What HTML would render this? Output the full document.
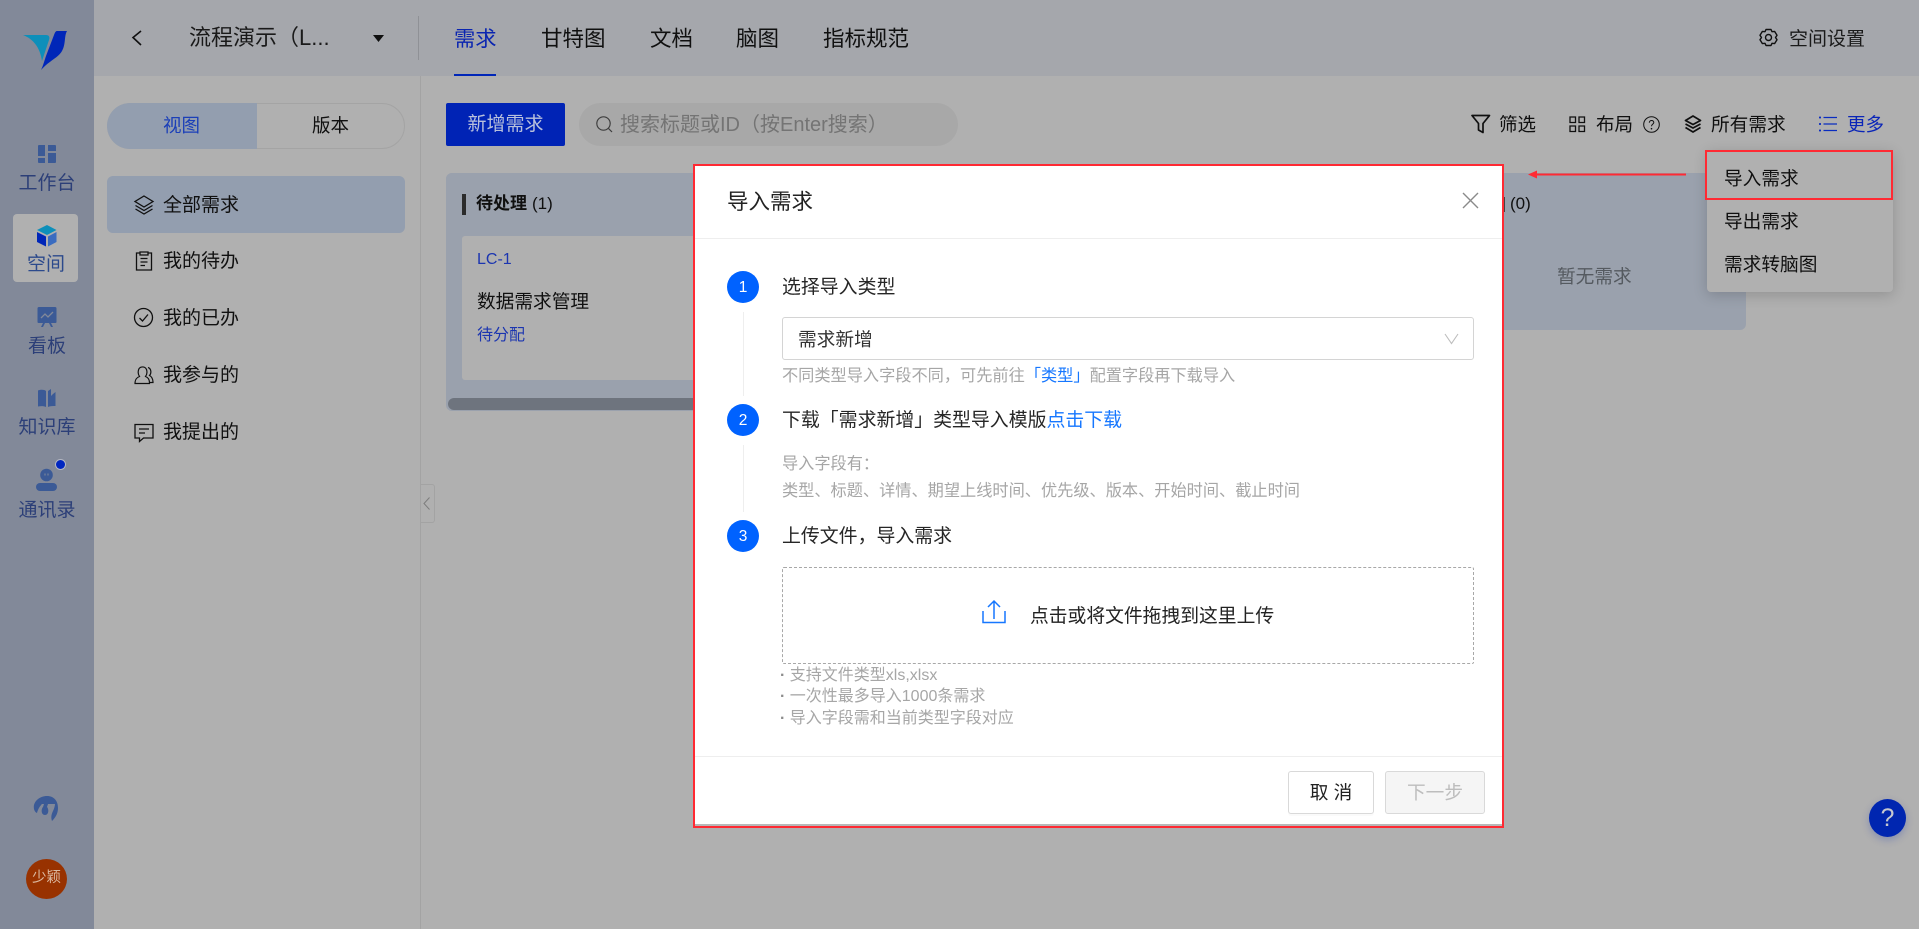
<!DOCTYPE html>
<html lang="zh-CN"><head><meta charset="utf-8"><title>导入需求</title>
<style>
*{box-sizing:border-box}
html,body{margin:0;padding:0;width:1919px;height:929px;overflow:hidden;background:#b0b0b0}
body{position:relative;font-family:"Liberation Sans","Noto Sans CJK SC",sans-serif;color:#101010}
.a{position:absolute}
.t{position:absolute;white-space:nowrap;line-height:30px;height:30px;font-size:19px;margin-top:2px}
svg{position:absolute;overflow:visible;fill:none}
.nav{color:#2c3f78;width:94px;left:0;text-align:center;font-size:19px}
.hint{color:#a6a6a6;font-size:16.2px}
.step{font-size:18.9px;color:#262626}
.c{position:absolute;left:727px;width:32px;height:32px;border-radius:50%;background:#0062ff;color:#fff;text-align:center;line-height:33px;font-size:15.5px}
.ln{position:absolute;left:743px;width:1px;background:#eeeeee}
b.d{font-weight:700;color:#8c8c8c}
</style></head><body>

<!-- sidebar -->
<div class="a" style="left:0;top:0;width:94px;height:929px;background:#828999"></div>
<svg style="left:0;top:0" width="94" height="80">
<path d="M23 35H46C49 35 50 37 49 40L42 61C40 47 33 39 23 35Z" fill="#0d8fba"/>
<path d="M57 31H67C64 36 66 44 62 51C58 58 50 60 41 70C43 66 44 62 46 56L54 35C55 32 56 31 57 31Z" fill="#0026b8"/>
</svg>
<svg style="left:38px;top:145px" width="18" height="18"><path d="M0 1a1 1 0 0 1 1-1h6v11H0zM10 0h7a1 1 0 0 1 1 1v5h-8zM10 8h8v9a1 1 0 0 1-1 1h-7zM0 13h7v5H1a1 1 0 0 1-1-1z" fill="#3b5a96"/></svg>
<div class="t nav" style="top:167px">工作台</div>
<div class="a" style="left:13px;top:214px;width:65px;height:68px;background:#b0b0b0;border-radius:4px"></div>
<svg style="left:36px;top:225px" width="22" height="22"><path d="M11 0L20.500 5 11 10 1 5Z" fill="#0d8fba"/><path d="M1 7L10 11.500V21.500L1 17Z" fill="#0026b8"/><path d="M20.500 7V17L12 21.500V11.500Z" fill="#3a6cc0"/></svg>
<div class="t nav" style="top:248px;color:#2c4a8c;width:92px">空间</div>
<svg style="left:37px;top:307px" width="20" height="20"><path d="M2 0H18a1.500 1.500 0 0 1 1.500 1.500V15a1 1 0 0 1-1 1H14l2 4h-2l-2-4H8L6 20H4l2-4H1.500a1 1 0 0 1-1-1V1.500A1.500 1.500 0 0 1 2 0Z" fill="#3b5a96"/><path d="M4 11L8 7 11 10 16 5" stroke="#828999" stroke-width="1.300"/></svg>
<div class="t nav" style="top:330px">看板</div>
<svg style="left:38px;top:389px" width="18" height="18"><path d="M0 1.500C3 .5 6 .5 8 2V18C6 17 3 17 0 17.500ZM10 2L13 0V7L15 5 17.500 3V17C15 17 12 17 10 18Z" fill="#3b5a96"/></svg>
<div class="t nav" style="top:411px">知识库</div>
<svg style="left:36px;top:460px" width="22" height="32"><circle cx="10.500" cy="15" r="6.300" fill="#3b5a96"/><rect x="0" y="23" width="21" height="8" rx="4" fill="#3b5a96"/><path d="M9 13.500v2M12 13.500v2" stroke="#828999"/></svg>
<div class="a" style="left:55.500px;top:459.500px;width:9px;height:9px;border-radius:50%;background:#0026c0;box-shadow:0 0 0 1px #b4b8c4"></div>
<div class="t nav" style="top:494px">通讯录</div>
<svg style="left:33px;top:796px" width="28" height="26"><path d="M14 0C21 0 25 5 25 12C25 18 22 22 19 25C18 22 18 19 20 15C21 13 22 10 22 8H15L14 11C16 13 16 19 12 19C8 19 8 13 10 11L11 8H9C7 10 5 13 4 17C2 16 0.800 14 0.800 11C0.800 5 7 0 14 0Z" fill="#3b5a96"/></svg>
<div class="a" style="left:26px;top:859px;width:41px;height:40px;border-radius:50%;background:#983200;color:#dbb9a0;font-size:14.500px;line-height:38px;text-align:center;white-space:nowrap">少颖</div>

<!-- header -->
<div class="a" style="left:94px;top:0;width:1825px;height:76px;background:#a5a7ac"></div>
<svg style="left:131px;top:30px" width="12" height="16"><path d="M10 1L2 7.500 10 15" stroke="#101010" stroke-width="1.600"/></svg>
<div class="t" style="left:189px;top:21px;font-size:22px;color:#1a1a1a">流程演示（L...</div>
<svg style="left:373px;top:35px" width="11" height="8"><path d="M0 0H11L5.500 7Z" fill="#101010"/></svg>
<div class="a" style="left:418px;top:16px;width:1px;height:44px;background:#8f9196"></div>
<div class="t" style="left:454px;top:22px;font-size:21.300px;color:#0a25b0">需求</div>
<div class="a" style="left:454px;top:74px;width:42px;height:2px;background:#0026b8"></div>
<div class="t" style="left:541px;top:22px;font-size:21.500px">甘特图</div>
<div class="t" style="left:650px;top:22px;font-size:21.500px">文档</div>
<div class="t" style="left:736px;top:22px;font-size:21.500px">脑图</div>
<div class="t" style="left:823px;top:22px;font-size:21.500px">指标规范</div>
<svg style="left:1759px;top:28px" width="19" height="19" viewBox="0 0 19 19"><path d="M7 1.500H12L13 3.700L15.600 3.400L18 7.300L16.500 9.500L18 11.700L15.600 15.600L13 15.300L12 17.500H7L6 15.300L3.400 15.600L1 11.700L2.500 9.500L1 7.300L3.400 3.400L6 3.700Z" stroke="#101010" stroke-width="1.400" stroke-linejoin="round"/><circle cx="9.500" cy="9.500" r="3" stroke="#101010" stroke-width="1.400"/></svg>
<div class="t" style="left:1789px;top:23px;color:#1a1a1a">空间设置</div>

<!-- left panel -->
<div class="a" style="left:420px;top:76px;width:1px;height:853px;background:#a3a3a3"></div>
<div class="a" style="left:107px;top:103px;width:298px;height:46px;border-radius:23px;border:1px solid #a4a4a4"></div>
<div class="a" style="left:107px;top:103px;width:150px;height:46px;border-radius:23px 0 0 23px;background:#939eaf"></div>
<div class="t" style="left:163px;top:109px;font-size:18.500px;color:#1b3fb8">视图</div>
<div class="t" style="left:312px;top:109px;font-size:18.500px">版本</div>
<div class="a" style="left:107px;top:176px;width:298px;height:57px;border-radius:6px;background:#939eaf"></div>
<svg style="left:134px;top:195px" width="20" height="20"><path d="M10 1L19 6.500 10 12 1 6.500Z M1.500 10.500L10 15.500 18.500 10.500 M1.500 14L10 19 18.500 14" stroke="#101010" stroke-width="1.300"/></svg>
<div class="t" style="left:163px;top:189px">全部需求</div>
<svg style="left:135px;top:251px" width="18" height="20"><path d="M5 2H1.500V19H16.500V2H13M5 1H13V4H5Z M5.500 7.500H12.500M5.500 11H12.500M5.500 14.500H10" stroke="#101010" stroke-width="1.300"/></svg>
<div class="t" style="left:163px;top:245px">我的待办</div>
<svg style="left:134px;top:308px" width="20" height="20"><circle cx="9.500" cy="9.500" r="9" stroke="#101010" stroke-width="1.300"/><path d="M5.500 10L8.500 13 14 6.500" stroke="#101010" stroke-width="1.300"/></svg>
<div class="t" style="left:163px;top:302px">我的已办</div>
<svg style="left:134px;top:365px" width="20" height="20"><path d="M1 18.500C1 14 3 12.500 5.500 11.500 4 9.500 4 7 4.500 5 5.500 1 11 1 12.500 4.500 13.500 7.500 13 9.500 11.500 11.500 14 12.500 15.500 14 15.500 18.500Z M14 2.500C17.500 3.500 17.500 8.500 15.500 10.500 17.500 11.500 19 13 19 17.500H16" stroke="#101010" stroke-width="1.200"/></svg>
<div class="t" style="left:163px;top:359px">我参与的</div>
<svg style="left:134px;top:423px" width="20" height="20"><path d="M1 1.500H19V15H9.500L5.500 18.500V15H1Z M5 6H15M5 10H11" stroke="#101010" stroke-width="1.300"/></svg>
<div class="t" style="left:163px;top:416px">我提出的</div>
<div class="a" style="left:420px;top:484px;width:15px;height:39px;border:1px solid #a3a3a3;border-left:0;border-radius:0 3px 3px 0"></div>
<svg style="left:423px;top:497px" width="8" height="13"><path d="M6.500 .5L1 6.500 6.500 12.500" stroke="#7d7d7d"/></svg>

<!-- toolbar -->
<div class="a" style="left:446px;top:103px;width:119px;height:43px;background:#0023b5;border-radius:2px;color:#b8c0dc;font-size:19px;line-height:44px;text-align:center">新增需求</div>
<div class="a" style="left:579px;top:103px;width:379px;height:43px;border-radius:22px;background:#a8a8a8"></div>
<svg style="left:596px;top:116px" width="17" height="17"><circle cx="7.500" cy="7.500" r="6.700" stroke="#3e3e3e" stroke-width="1.200"/><path d="M12.500 12.500L16 16" stroke="#3e3e3e" stroke-width="1.200"/></svg>
<div class="t" style="left:620px;top:108px;color:#747474;font-size:20px">搜索标题或ID（按Enter搜索）</div>
<svg style="left:1471px;top:114px" width="20" height="20"><path d="M1 1.500H18.500L12 9.500V18.500L7.500 16V9.500Z" stroke="#101010" stroke-width="1.700" stroke-linejoin="round"/></svg>
<div class="t" style="left:1499px;top:108px;font-size:18.500px">筛选</div>
<svg style="left:1569px;top:116px" width="17" height="17"><path d="M1 1H6.500V6.500H1ZM10 1H15.500V6.500H10ZM1 10H6.500V15.500H1ZM10 10H15.500V15.500H10Z" stroke="#101010" stroke-width="1.300"/></svg>
<div class="t" style="left:1596px;top:108px;font-size:18.500px">布局</div>
<svg style="left:1643px;top:116px" width="17" height="17"><circle cx="8.500" cy="8.500" r="7.800" stroke="#101010"/><path d="M6.300 6.700C6.300 3.800 10.800 3.800 10.800 6.500 10.800 8.200 8.500 8.200 8.500 10.300" stroke="#101010"/><circle cx="8.500" cy="12.700" r=".8" fill="#101010"/></svg>
<svg style="left:1684px;top:115px" width="18" height="18"><path d="M9 1L16.500 5.500 9 9.500 1.500 5.500Z M1.500 9L9 13 16.500 9 M1.500 12.500L9 17 16.500 12.500" stroke="#101010" stroke-width="1.700" stroke-linejoin="round"/></svg>
<div class="t" style="left:1711px;top:108px;font-size:18.700px">所有需求</div>
<svg style="left:1819px;top:116px" width="18" height="16"><path d="M4.500 1.500H18M4.500 8H18M4.500 14.500H18" stroke="#0a2cc0" stroke-width="1.300"/><path d="M0 1.500H2M0 8H2M0 14.500H2" stroke="#0a2cc0" stroke-width="1.800"/></svg>
<div class="t" style="left:1847px;top:108px;font-size:18.500px;color:#0a25b8">更多</div>

<!-- board -->
<div class="a" style="left:446px;top:173px;width:1300px;height:157px;background:#9aa1ad;border-radius:6px"></div>
<div class="a" style="left:446px;top:173px;width:300px;height:238px;background:#9aa1ad;border-radius:6px"></div>
<div class="a" style="left:462px;top:194px;width:4px;height:21px;background:#2b2b2b"></div>
<div class="t" style="left:476px;top:187px;font-size:17px;font-weight:700">待处理</div>
<div class="t" style="left:532px;top:187px;font-size:17px">(1)</div>
<div class="a" style="left:462px;top:236px;width:260px;height:144px;background:#b0b0b0;border-radius:3px"></div>
<div class="t" style="left:477px;top:243px;font-size:16px;color:#1b35b0">LC-1</div>
<div class="t" style="left:477px;top:285px;font-size:18.700px">数据需求管理</div>
<div class="t" style="left:477px;top:319px;font-size:16px;color:#1b35b0">待分配</div>
<div class="a" style="left:448px;top:398px;width:260px;height:12px;background:#6e747e;border-radius:6px"></div>
<div class="a" style="left:1504px;top:197px;width:1px;height:15px;background:#444"></div>
<div class="t" style="left:1510px;top:187px;font-size:17px">(0)</div>
<div class="t" style="left:1557px;top:260px;font-size:18.700px;color:#555a60">暂无需求</div>

<!-- dropdown -->
<div class="a" style="left:1707px;top:150px;width:186px;height:142px;background:#b0b0b0;border-radius:4px;box-shadow:0 3px 14px rgba(0,0,0,.18)"></div>
<div class="t" style="left:1724px;top:162px;font-size:18.700px">导入需求</div>
<div class="t" style="left:1724px;top:205px;font-size:18.700px">导出需求</div>
<div class="t" style="left:1724px;top:248px;font-size:18.700px">需求转脑图</div>
<div class="a" style="left:1705px;top:150px;width:188px;height:50px;border:2px solid #ff2a33"></div>
<svg style="left:1528px;top:170px" width="160" height="9"><path d="M0 4.500L9 .5V3.500H158V5.500H9V8.500Z" fill="#ff2a33"/></svg>

<!-- modal -->
<div class="a" style="left:693px;top:164px;width:811px;height:664px;border:2px solid #ff2a33;background:#fff;border-bottom-width:2px"></div>
<div class="a" style="left:695px;top:824px;width:807px;height:2px;background:#b8b8b8"></div>
<div class="t" style="left:727px;top:185px;font-size:21.500px;color:#222">导入需求</div>
<svg style="left:1462px;top:192px" width="17" height="17"><path d="M1 1L16 16M16 1L1 16" stroke="#8a8a8a" stroke-width="1.400"/></svg>
<div class="a" style="left:695px;top:238px;width:807px;height:1px;background:#eeeeee"></div>

<div class="c" style="top:271px">1</div>
<div class="ln" style="top:312px;height:84px"></div>
<div class="t step" style="left:782px;top:271px">选择导入类型</div>
<div class="a" style="left:782px;top:317px;width:692px;height:43px;border:1px solid #d4d4d4;border-radius:3px"></div>
<div class="t" style="left:798px;top:323px;font-size:18.700px;color:#333">需求新增</div>
<svg style="left:1444px;top:333px" width="15" height="12"><path d="M1 1L7.500 10.500 14 1" stroke="#bdbdbd" stroke-width="1.100"/></svg>
<div class="t hint" style="left:782px;top:359px">不同类型导入字段不同，可先前往<span style="color:#1677ff">「类型」</span>配置字段再下载导入</div>

<div class="c" style="top:404px">2</div>
<div class="ln" style="top:445px;height:67px"></div>
<div class="t step" style="left:782px;top:404px">下载「需求新增」类型导入模版<span style="color:#1677ff">点击下载</span></div>
<div class="t hint" style="left:782px;top:447px">导入字段有：</div>
<div class="t hint" style="left:782px;top:474px">类型、标题、详情、期望上线时间、优先级、版本、开始时间、截止时间</div>

<div class="c" style="top:520px">3</div>
<div class="t step" style="left:782px;top:520px">上传文件，导入需求</div>
<div class="a" style="left:782px;top:567px;width:692px;height:97px;border:1px dashed #a8a8a8;border-radius:2px"></div>
<svg style="left:982px;top:600px" width="24" height="24"><path d="M12 1V19M6 7L12 1 18 7" stroke="#1677ff" stroke-width="1.500"/><path d="M1 11V22.500H23V11" stroke="#1677ff" stroke-width="1.500"/></svg>
<div class="t" style="left:1030px;top:599px;font-size:18.800px;color:#222">点击或将文件拖拽到这里上传</div>
<div class="t hint" style="left:780px;top:659px;font-size:16px"><b class="d">·</b> 支持文件类型xls,xlsx</div>
<div class="t hint" style="left:780px;top:680px;font-size:16px"><b class="d">·</b> 一次性最多导入1000条需求</div>
<div class="t hint" style="left:780px;top:702px;font-size:16px"><b class="d">·</b> 导入字段需和当前类型字段对应</div>

<div class="a" style="left:695px;top:756px;width:807px;height:1px;background:#eeeeee"></div>
<div class="a" style="left:1288px;top:771px;width:86px;height:43px;border:1px solid #d9d9d9;border-radius:3px;text-align:center;line-height:41px;font-size:18.700px;color:#222;box-shadow:0 2px 0 rgba(0,0,0,.02)">取 消</div>
<div class="a" style="left:1385px;top:771px;width:100px;height:43px;border:1px solid #d9d9d9;border-radius:3px;background:#f5f5f5;text-align:center;line-height:41px;font-size:18.700px;color:#bdbdbd">下一步</div>

<!-- help -->
<div class="a" style="left:1869px;top:799px;width:37px;height:38px;border-radius:50%;background:#0026b0;color:#c6c9cf;font-size:25px;line-height:38px;text-align:center;font-weight:400;box-shadow:0 3px 8px rgba(0,38,176,.25)">?</div>
</body></html>
